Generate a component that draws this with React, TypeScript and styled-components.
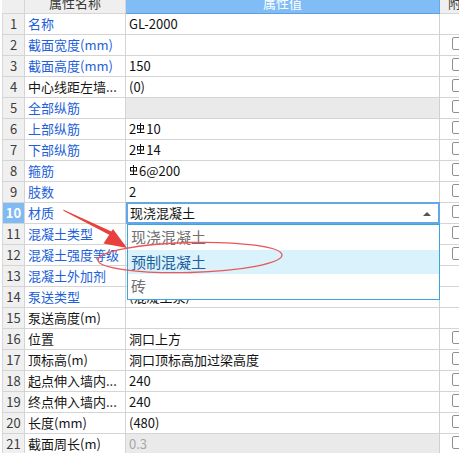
import styled, { createGlobalStyle } from "styled-components";

const GlobalStyle = createGlobalStyle`
  html, body {
    margin: 0;
    padding: 0;
    background: #ffffff;
    overflow: hidden;
  }
  body {
    font-family: "Noto Sans CJK SC", "Noto Sans", sans-serif;
    font-size: 13px;
  }
`;

type Row = {
  no: number;
  name: string;
  value?: React.ReactNode;
  blue?: boolean;
  shaded?: boolean;
  check?: boolean;
  muted?: boolean;
};

const RebarSymbol = () => (
  <svg width="8" height="12" viewBox="0 0 8 12" style={{ margin: "0 1px", verticalAlign: "-1px" }}>
    <rect x="0.5" y="2.5" width="6" height="3.5" fill="none" stroke="#111" strokeWidth="1" />
    <line x1="3.5" y1="0" x2="3.5" y2="9" stroke="#111" strokeWidth="1" />
    <line x1="0" y1="9.5" x2="7.5" y2="9.5" stroke="#111" strokeWidth="1" />
  </svg>
);

const rows: Row[] = [
  { no: 1, name: "名称", value: "GL-2000", blue: true },
  { no: 2, name: "截面宽度(mm)", value: "", blue: true, check: true },
  { no: 3, name: "截面高度(mm)", value: "150", blue: true, check: true },
  { no: 4, name: "中心线距左墙...", value: "(0)", check: true },
  { no: 5, name: "全部纵筋", value: "", blue: true, shaded: true, check: true },
  { no: 6, name: "上部纵筋", value: <>2<RebarSymbol />10</>, blue: true, check: true },
  { no: 7, name: "下部纵筋", value: <>2<RebarSymbol />14</>, blue: true, check: true },
  { no: 8, name: "箍筋", value: <><RebarSymbol />6@200</>, blue: true, check: true },
  { no: 9, name: "肢数", value: "2", blue: true, check: true },
  { no: 10, name: "材质", value: "现浇混凝土", blue: true, check: true },
  { no: 11, name: "混凝土类型", value: "", blue: true, check: true },
  { no: 12, name: "混凝土强度等级", value: "", blue: true, check: true },
  { no: 13, name: "混凝土外加剂", value: "", blue: true },
  { no: 14, name: "泵送类型", value: "(混凝土泵)", blue: true },
  { no: 15, name: "泵送高度(m)", value: "" },
  { no: 16, name: "位置", value: "洞口上方", check: true },
  { no: 17, name: "顶标高(m)", value: "洞口顶标高加过梁高度", check: true },
  { no: 18, name: "起点伸入墙内...", value: "240", check: true },
  { no: 19, name: "终点伸入墙内...", value: "240", check: true },
  { no: 20, name: "长度(mm)", value: "(480)", check: true },
  { no: 21, name: "截面周长(m)", value: "0.3", shaded: true, muted: true, check: true },
];

const options = ["现浇混凝土", "预制混凝土", "砖"];

export default function App() {
  return (
    <Page>
      <GlobalStyle />
      <Table>
        <HeaderRow>
          <HeadCell />
          <HeadCell>属性名称</HeadCell>
          <HeadCell $active>属性值</HeadCell>
          <HeadCell $align="left">附加</HeadCell>
        </HeaderRow>
        {rows.map((r) => {
          const selected = r.no === 10;
          return (
            <BodyRow key={r.no}>
              <IndexCell $selected={selected}>{r.no}</IndexCell>
              <NameCell $blue={r.blue}>{r.name}</NameCell>
              <ValueCell $shaded={r.shaded} $muted={r.muted} $editing={selected}>
                {r.value}
                {selected && (
                  <>
                    <Caret />
                    <DropList>
                      {options.map((o, i) => (
                        <DropItem key={o} $hover={i === 1}>
                          {o}
                        </DropItem>
                      ))}
                    </DropList>
                  </>
                )}
              </ValueCell>
              <CheckCell>{r.check && <CheckBox />}</CheckCell>
            </BodyRow>
          );
        })}
      </Table>
      <Annotation width="459" height="453" viewBox="0 0 459 453">
        <polygon points="63,209.6 63.8,211 110.6,235.5 112.6,232" fill="#e8403d" />
        <polygon points="127,248 103.5,243.5 113,229" fill="#e8403d" />
        <ellipse
          cx="190"
          cy="257.5"
          rx="92"
          ry="15"
          fill="none"
          stroke="#ea5659"
          strokeWidth="1.3"
          transform="rotate(-1.5 190 257.5)"
        />
      </Annotation>
    </Page>
  );
}

const Page = styled.div`
  position: relative;
  width: 459px;
  height: 453px;
  overflow: hidden;
  background: #ffffff;
`;

const Table = styled.div`
  margin-top: -8px;
  padding-left: 2px;
  width: 500px;
  display: flex;
  flex-direction: column;
`;

const cols = "23px 101px 314px 60px";

const HeaderRow = styled.div`
  display: grid;
  grid-template-columns: ${cols};
  height: 22px;
`;

const HeadCell = styled.div<{ $active?: boolean; $align?: string }>`
  display: flex;
  align-items: center;
  justify-content: ${(p) => (p.$align === "left" ? "flex-start" : "center")};
  padding-left: ${(p) => (p.$align === "left" ? "8px" : "0")};
  box-sizing: border-box;
  white-space: nowrap;
  background: ${(p) => (p.$active ? "#80bcf6" : "#efefef")};
  color: ${(p) => (p.$active ? "#ffffff" : "#3a3a3a")};
  border-right: 1px solid ${(p) => (p.$active ? "#6ea8e4" : "#d6d6d6")};
  border-bottom: 1px solid ${(p) => (p.$active ? "#5e9fe0" : "#d6d6d6")};
  font-size: 13px;
  line-height: 20px;
`;

const BodyRow = styled.div`
  display: grid;
  grid-template-columns: ${cols};
  height: 21px;
`;

const Cell = styled.div`
  box-sizing: border-box;
  border-right: 1px solid #d4d4d4;
  border-bottom: 1px solid #d4d4d4;
  display: flex;
  align-items: center;
  white-space: nowrap;
  overflow: hidden;
  font-size: 13px;
  line-height: 20px;
`;

const IndexCell = styled(Cell)<{ $selected?: boolean }>`
  justify-content: center;
  background: ${(p) => (p.$selected ? "#7fbaf2" : "#f0f0f0")};
  color: ${(p) => (p.$selected ? "#ffffff" : "#3c3c3c")};
  font-weight: ${(p) => (p.$selected ? 700 : 400)};
  border-left: 1px solid #d8d8d8;
`;

const NameCell = styled(Cell)<{ $blue?: boolean }>`
  padding-left: 3px;
  color: ${(p) => (p.$blue ? "#2160d8" : "#151515")};
`;

const ValueCell = styled(Cell)<{ $shaded?: boolean; $muted?: boolean; $editing?: boolean }>`
  position: relative;
  overflow: visible;
  padding-left: ${(p) => (p.$editing ? "2px" : "3px")};
  background: ${(p) => (p.$shaded ? "#eaeaea" : "#ffffff")};
  color: ${(p) => (p.$muted ? "#a6a6a6" : "#111111")};
  border-right-color: #d0d0d0;
  ${(p) =>
    p.$editing &&
    `
    border: 2px solid #62a7ea;
    margin-top: -1px;
    height: 22px;
    z-index: 2;
  `}
`;

const Caret = styled.span`
  position: absolute;
  right: 7px;
  top: 8px;
  width: 0;
  height: 0;
  border-left: 4px solid transparent;
  border-right: 4px solid transparent;
  border-bottom: 4px solid #555555;
`;

const DropList = styled.div`
  position: absolute;
  left: -1px;
  top: 20px;
  width: 313px;
  box-sizing: border-box;
  background: #ffffff;
  border: 1px solid #3aa6dc;
  display: flex;
  flex-direction: column;
  z-index: 3;
`;

const DropItem = styled.div<{ $hover?: boolean }>`
  height: 24.5px;
  display: flex;
  align-items: center;
  padding-left: 3px;
  font-size: 15px;
  background: ${(p) => (p.$hover ? "#d9f2fb" : "transparent")};
  color: ${(p) => (p.$hover ? "#1d5fa0" : "#707070")};
`;

const CheckCell = styled(Cell)`
  padding-left: 12px;
  align-items: flex-start;
  padding-top: 2px;
  border-right: none;
`;

const CheckBox = styled.span`
  display: block;
  width: 13px;
  height: 13px;
  box-sizing: border-box;
  border: 1px solid #8f8f8f;
  border-radius: 2px;
  background: #ffffff;
`;

const Annotation = styled.svg`
  position: absolute;
  left: 0;
  top: 0;
  pointer-events: none;
  z-index: 5;
`;
